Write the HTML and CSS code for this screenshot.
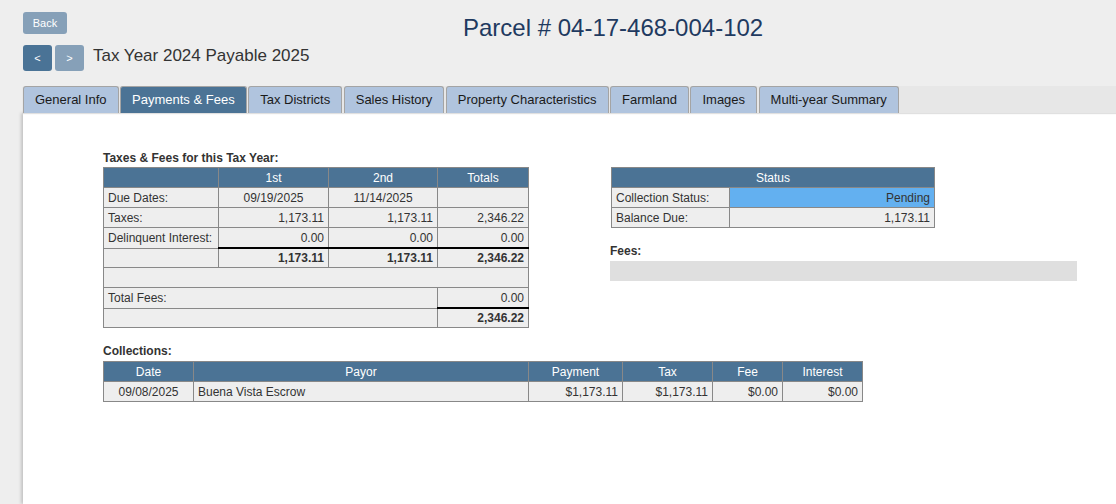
FILE: index.html
```html
<!DOCTYPE html>
<html lang="en">
<head>
<meta charset="utf-8">
<title>Parcel 04-17-468-004-102</title>
<link rel="stylesheet" href="styles.css">
</head>
<body>
<div class="header">
  <div class="header-left">
    <button class="btn btn-back">Back</button>
    <div class="nav">
      <button class="btn btn-nav btn-dark">&lt;</button>
      <button class="btn btn-nav btn-light">&gt;</button>
      <span class="year">Tax Year 2024 Payable 2025</span>
    </div>
  </div>
  <h1 class="parcel">Parcel # 04-17-468-004-102</h1>
</div>

<div class="tabs">
  <div class="tab">General Info</div>
  <div class="tab active">Payments &amp; Fees</div>
  <div class="tab">Tax Districts</div>
  <div class="tab">Sales History</div>
  <div class="tab">Property Characteristics</div>
  <div class="tab">Farmland</div>
  <div class="tab">Images</div>
  <div class="tab">Multi-year Summary</div>
</div>

<div class="panel">
  <div class="cols">
    <div class="col-left">
      <div class="section-label">Taxes &amp; Fees for this Tax Year:</div>
      <table class="grid taxes">
        <colgroup><col class="c1"><col class="c2"><col class="c3"><col class="c4"></colgroup>
        <tr class="head"><th></th><th>1st</th><th>2nd</th><th>Totals</th></tr>
        <tr><td>Due Dates:</td><td class="ctr">09/19/2025</td><td class="ctr">11/14/2025</td><td></td></tr>
        <tr><td>Taxes:</td><td class="num">1,173.11</td><td class="num">1,173.11</td><td class="num">2,346.22</td></tr>
        <tr><td>Delinquent Interest:</td><td class="num">0.00</td><td class="num">0.00</td><td class="num">0.00</td></tr>
        <tr class="short"><td></td><td class="num bold thick">1,173.11</td><td class="num bold thick">1,173.11</td><td class="num bold thick">2,346.22</td></tr>
        <tr><td colspan="4"></td></tr>
        <tr><td colspan="3">Total Fees:</td><td class="num">0.00</td></tr>
        <tr class="short"><td colspan="3"></td><td class="num bold thick">2,346.22</td></tr>
      </table>
    </div>
    <div class="col-right">
      <table class="grid status">
        <colgroup><col class="s1"><col class="s2"></colgroup>
        <tr class="head"><th colspan="2">Status</th></tr>
        <tr><td>Collection Status:</td><td class="num pending">Pending</td></tr>
        <tr><td>Balance Due:</td><td class="num">1,173.11</td></tr>
      </table>
      <div class="section-label fees-label">Fees:</div>
      <div class="fees-bar"></div>
    </div>
  </div>

  <div class="section-label coll-label">Collections:</div>
  <table class="grid collections">
    <colgroup><col class="k1"><col class="k2"><col class="k3"><col class="k4"><col class="k5"><col class="k6"></colgroup>
    <tr class="head"><th>Date</th><th>Payor</th><th>Payment</th><th>Tax</th><th>Fee</th><th>Interest</th></tr>
    <tr><td class="ctr">09/08/2025</td><td>Buena Vista Escrow</td><td class="num">$1,173.11</td><td class="num">$1,173.11</td><td class="num">$0.00</td><td class="num">$0.00</td></tr>
  </table>
</div>
</body>
</html>
```

FILE: styles.css
```css
html, body {
  margin: 0;
  padding: 0;
}
body {
  background: #eeeeee;
  font-family: "Liberation Sans", Arial, sans-serif;
  color: #333;
  height: 504px;
  overflow: hidden;
}

.header {
  display: flex;
  align-items: flex-start;
  padding: 12px 0 0 23px;
}
.header-left {
  width: 272px;
  display: flex;
  flex-direction: column;
  align-items: flex-start;
}
.btn {
  font-family: "Liberation Sans", Arial, sans-serif;
  border: none;
  color: #fff;
  border-radius: 3px;
  padding: 0;
  margin: 0;
  cursor: pointer;
}
.btn-back {
  width: 44px;
  height: 22px;
  font-size: 11px;
  background: #86a0b8;
}
.nav {
  display: flex;
  align-items: center;
  margin-top: 11px;
  gap: 3px;
}
.btn-nav {
  width: 29px;
  height: 26px;
  font-size: 11px;
}
.btn-dark { background: #4a7396; }
.btn-light { background: #86a0b8; }
.year {
  margin-left: 6px;
  font-size: 17px;
  color: #333;
  white-space: nowrap;
  margin-top: -4px;
}
.parcel {
  margin: 2px 0 0 168px;
  font-size: 24px;
  font-weight: normal;
  line-height: 28px;
  color: #1f3a60;
  white-space: nowrap;
}

.tabs {
  display: flex;
  margin: 15px 0 0 23px;
  background: #e7e7e7;
  height: 27px;
  box-shadow: 0 1px 1px rgba(0,0,0,0.12);
  position: relative;
  z-index: 1;
}
.tab {
  box-sizing: border-box;
  height: 27px;
  line-height: 25px;
  padding: 0 11px;
  margin-right: 1.5px;
  font-size: 13px;
  color: #1a1a1a;
  background: #b0c4de;
  border: 1px solid #a4a4a4;
  border-bottom: none;
  border-radius: 3px 3px 0 0;
  white-space: nowrap;
}
.tab.active {
  background: #4b7395;
  color: #fff;
}

.panel {
  margin-left: 23px;
  background: #fff;
  height: 353px;
  padding: 38px 0 0 80px;
  box-shadow: -2px 0 3px rgba(0,0,0,0.18);
}
.cols {
  display: flex;
  align-items: flex-start;
}
.col-left {
  width: 425px;
}
.col-right {
  margin-left: 82px;
  padding-top: 16px;
}
.section-label {
  font-size: 12px;
  font-weight: bold;
  line-height: 14px;
  color: #333;
  margin-bottom: 2px;
}

.grid {
  border-collapse: collapse;
  table-layout: fixed;
  font-size: 12px;
  color: #333;
}
.grid td, .grid th {
  border: 1px solid #888;
  height: 19px;
  padding: 0 4px;
  line-height: 14px;
  background: #eeeeee;
  white-space: nowrap;
  overflow: hidden;
  text-align: left;
}
.grid tr.short td {
  height: 18px;
}
.grid tr.head th {
  background: #4b7395;
  color: #fff;
  font-weight: normal;
  text-align: center;
}
.grid .ctr { text-align: center; }
.grid .num { text-align: right; }
.grid .bold { font-weight: bold; }
.grid td.thick { border-top: 2px solid #000; }

.taxes { width: 425px; }
.taxes .c1 { width: 115px; }
.taxes .c2 { width: 110px; }
.taxes .c3 { width: 109px; }
.taxes .c4 { width: 91px; }

.status { width: 323px; margin-left: 1px; }
.status .s1 { width: 118px; }
.status .s2 { width: 205px; }
.grid td.pending { background: #63b0f0; }

.fees-label {
  margin-top: 16px;
  margin-bottom: 3px;
}
.fees-bar {
  width: 467px;
  height: 20px;
  background: #dfdfdf;
}

.coll-label {
  margin-top: 16px;
  margin-bottom: 3px;
}
.collections { width: 759px; }
.collections .k1 { width: 90px; }
.collections .k2 { width: 335px; }
.collections .k3 { width: 94px; }
.collections .k4 { width: 90px; }
.collections .k5 { width: 70px; }
.collections .k6 { width: 80px; }
```
